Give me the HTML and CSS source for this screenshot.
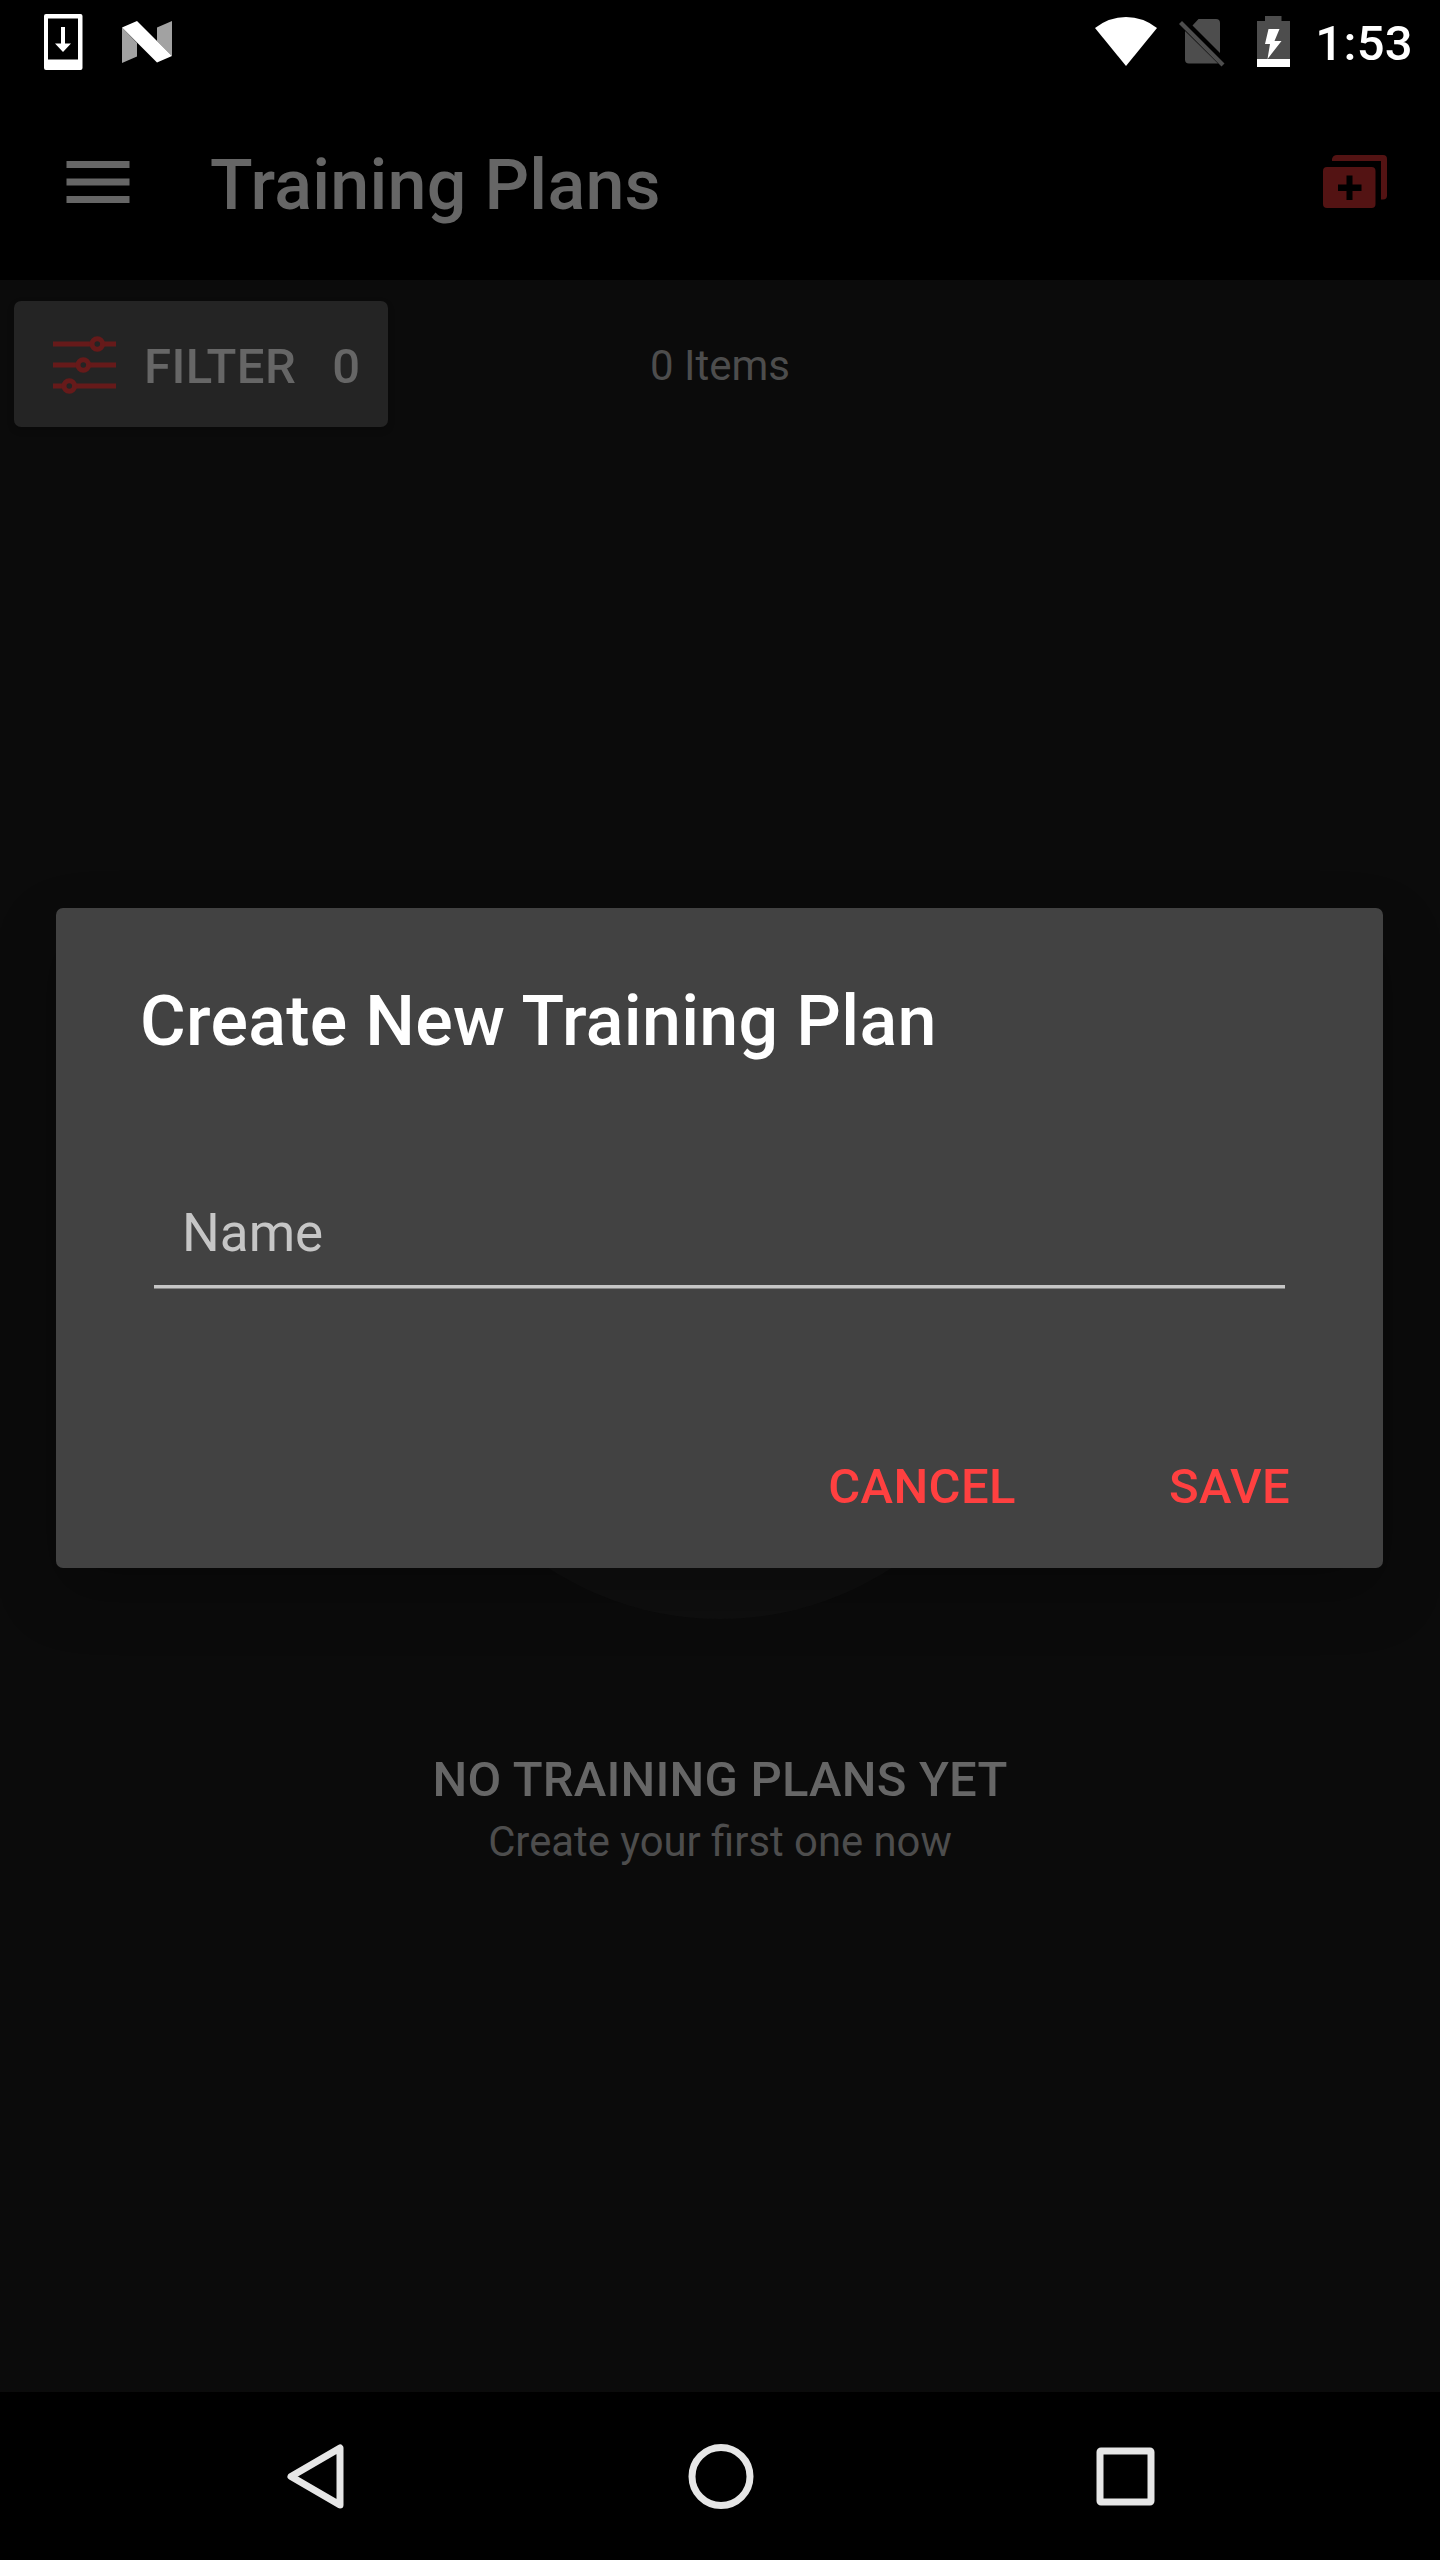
FILE: index.html
```
<!DOCTYPE html>
<html lang="en">

<head>
  <meta charset="UTF-8" />
  <meta name="viewport" content="width=device-width, initial-scale=1.0" />
  <title>Training Plans</title>
  <link rel="stylesheet" href="styles.css">
</head>

<body>
  <div class="screen">
    <div class="status-bar">
      <div class="status-left">
        <svg width="40" height="58" viewBox="0 0 40 58">
          <path fill="#fff" fill-rule="evenodd" d="M2 0h34.500q2 0 2 2v52q0 2-2 2h-34.500q-2 0-2-2V2q0-2 2-2zM4 4.500v41h30v-41z" />
          <path fill="#fff" d="M17 13h4v16.500h6l-8 8.500-8-8.500h6z" />
        </svg>
        <svg class="n-logo" width="50" height="44" viewBox="0 0 50 44">
          <path fill="#a2a2a2" d="M0 6.500L15 22v13.500L0 42zM35 6.500L50 0v35L35 20z" />
          <path fill="#fff" d="M0 6.500L15 0l35 35-15 6.500z" />
        </svg>
      </div>
      <div class="status-right">
        <svg class="wifi" width="62" height="50" viewBox="0 0 62 50">
          <path fill="#fff" d="M0 11Q14 0 31 0t31 11L31 49z" />
        </svg>
        <svg class="sim" width="46" height="46" viewBox="0 0 46 46">
          <path fill="#4d4d4d" d="M19.500 0H37q4 0 4 4v30L13.500 6.500zM6 12l33 32.500H10q-4 0-4-4z" />
          <path fill="#4d4d4d" d="M0 5l3-3 42.500 42.500-3 3z" />
        </svg>
        <svg class="battery" width="33" height="51" viewBox="0 0 33 51">
          <path fill="#4d4d4d" d="M8 0h16.500v5H33v38H0V5h8z" />
          <path fill="#fff" d="M0 43h33v8H0zM11.500 13h11l-5 12h7L10.500 43l2.500-15H8z" />
        </svg>
        <span class="clock">1:53</span>
      </div>
    </div>

    <header>
      <svg class="menu-icon" width="84" height="84" viewBox="0 0 24 24">
        <path fill="#666" d="M3 18h18v-2H3v2zm0-5h18v-2H3v2zm0-7v2h18V6H3z" />
      </svg>
      <h1>Training Plans</h1>
      <svg class="add-icon" width="64" height="54" viewBox="0 0 64 54">
        <path fill="#531313" fill-rule="evenodd" d="M4 12h44.500q4 0 4 4v33q0 4-4 4H4q-4 0-4-4V16q0-4 4-4zM23.500 20.500v9h-8.500v6.500h8.500v9h6v-9h9v-6.500h-9v-9z" />
        <path fill="#531313" d="M9 6V4q1-4 5-4h46q4 0 4 4v36.500q0 4-4 4h-2V6z" />
      </svg>
    </header>

    <main>
      <div class="toolbar">
        <button class="filter-btn">
          <svg width="64" height="60" viewBox="0 0 64 60" fill="none" stroke="#661a1a" stroke-width="5">
            <path d="M0 9h38.500M50 9h13M0 30h24.500M36 30h27M0 51h10.500M22 51h41" />
            <circle cx="44.300" cy="9" r="5.300" />
            <circle cx="30.300" cy="30" r="5.300" />
            <circle cx="16.300" cy="51" r="5.300" />
          </svg>
          <span class="filter-label">FILTER</span>
          <span>0</span>
        </button>
        <span class="item-count">0 Items</span>
      </div>

      <div class="empty">
        <div class="empty-circle"></div>
        <h3>NO TRAINING PLANS YET</h3>
        <p>Create your first one now</p>
      </div>
    </main>

    <nav>
      <svg width="66" height="67" viewBox="0 0 66 67">
        <path fill="none" stroke="#e6e6e6" stroke-width="7" stroke-linejoin="round" d="M57 5v57L8 33.500z" />
      </svg>
      <svg width="66" height="67" viewBox="0 0 66 67">
        <circle cx="33" cy="33.500" r="29" fill="none" stroke="#e6e6e6" stroke-width="7" />
      </svg>
      <svg width="66" height="67" viewBox="0 0 66 67">
        <rect x="8" y="8" width="51" height="51" rx="1" fill="none" stroke="#e6e6e6" stroke-width="7" stroke-linejoin="round" />
      </svg>
    </nav>
  </div>

  <div class="dialog">
    <h2>Create New Training Plan</h2>
    <div class="field">Name</div>
    <div class="actions">
      <button>CANCEL</button>
      <button>SAVE</button>
    </div>
  </div>
</body>

</html>
```
FILE: styles.css
```
:root {
  --bg: #0b0b0b;
  --surface: #424242;
  --accent: #ff4040;
  --text-dim: #666;
  --text-faint: #4d4d4d;
}

* {
  margin: 0;
  padding: 0;
  box-sizing: border-box;
  font-family: Roboto, sans-serif;
}

svg {
  display: block;
  flex-shrink: 0;
}

body {
  background: #000;
}

button {
  border: none;
  background: none;
  font-size: 49px;
  font-weight: 500;
  letter-spacing: 0.4px;
}

.screen {
  width: 1440px;
  height: 2560px;
  display: flex;
  flex-direction: column;
  overflow: hidden;
}

/* status bar */
.status-bar {
  height: 84px;
  display: flex;
  justify-content: space-between;
  padding: 0 27px 0 44px;
}

.status-left,
.status-right {
  display: flex;
  align-items: flex-start;
}

.status-left {
  padding-top: 14px;
  gap: 38px;
}

.n-logo {
  margin-top: 7px;
}

.wifi {
  margin: 17px 22px 0 0;
}

.sim {
  margin: 19px 32px 0 0;
  overflow: visible;
}

.battery {
  margin: 16px 25px 0 0;
}

.clock {
  color: #fff;
  font-size: 49px;
  font-weight: 500;
  line-height: 58px;
  letter-spacing: 0.3px;
  padding-top: 15px;
}

/* app bar */
header {
  height: 196px;
  display: flex;
  align-items: center;
  padding: 0 53px 0 56px;
}

header h1 {
  flex: 1;
  margin-left: 70px;
  padding-top: 6px;
  color: var(--text-dim);
  font-size: 70px;
  font-weight: 500;
  line-height: 82px;
  letter-spacing: 0.25px;
}

main {
  flex: 1;
  background: var(--bg);
}

.toolbar {
  display: grid;
  grid-template-columns: 1fr auto 1fr;
  align-items: center;
  padding: 21px 14px 0;
}

.filter-btn {
  width: 374px;
  height: 126px;
  display: flex;
  align-items: center;
  padding: 2px 0 0 39px;
  background: #242424;
  color: var(--text-dim);
  border-radius: 7px;
  box-shadow: 0 3px 7px rgba(0, 0, 0, 0.2);
}

.filter-label {
  margin: 2px 36px 0 27px;
}

.filter-label + span {
  margin-top: 2px;
}

.item-count {
  color: var(--text-faint);
  font-size: 42px;
  padding-top: 3px;
}

/* empty state */
.empty {
  padding-top: 562px;
  text-align: center;
}

.empty-circle {
  width: 630px;
  height: 630px;
  margin: 0 auto 132px;
  border-radius: 50%;
  background: #0f0f0f;
}

.empty h3 {
  color: var(--text-dim);
  font-size: 49px;
  font-weight: 500;
  line-height: 58px;
  letter-spacing: 0.2px;
}

.empty p {
  color: var(--text-faint);
  font-size: 41.8px;
  line-height: 50px;
  margin-top: 8px;
}

nav {
  height: 168px;
  display: flex;
  justify-content: space-between;
  align-items: flex-start;
  padding: 51px 282px 0 283px;
}

/* create dialog, sits over the page */
.dialog {
  position: absolute;
  top: 908px;
  left: 56px;
  width: 1327px;
  height: 660px;
  display: flex;
  flex-direction: column;
  padding: 72px 93px 19px 84px;
  background: var(--surface);
  border-radius: 7px;
  box-shadow: 0 25px 60px rgba(0, 0, 0, 0.25);
}

.dialog h2 {
  color: #fff;
  font-size: 70px;
  font-weight: 500;
  line-height: 82px;
  letter-spacing: 0.3px;
}

.field {
  margin: 139px 5px 0 14px;
  padding: 0 28px 20px;
  color: #c6c6c6;
  font-size: 53px;
  line-height: 64px;
  border-bottom: 3px solid #c6c6c6;
  box-shadow: 0 1px 0 #858585;
}

.actions {
  display: flex;
  justify-content: flex-end;
  gap: 153px;
  margin-top: auto;
}

.actions button {
  height: 126px;
  color: var(--accent);
}
```
